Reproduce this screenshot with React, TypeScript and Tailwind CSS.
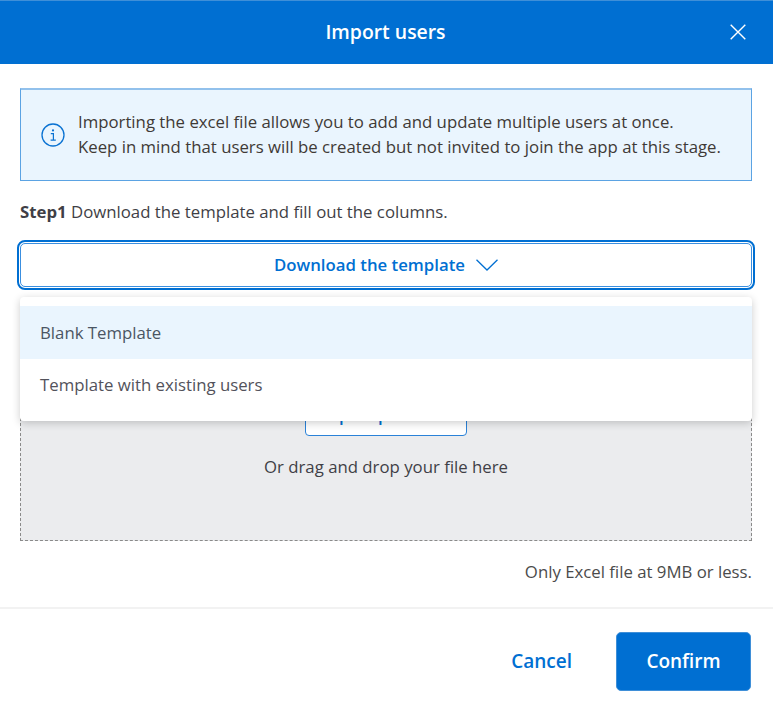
const App = () => {
  return (
    <div className="w-[773px] h-[713px] bg-white font-['Open_Sans',sans-serif] text-[#3f3f46] overflow-hidden">
      {/* Header */}
      <div className="h-[64px] bg-[#006fd2] border-t border-[#3f8fd8] relative flex items-center justify-center">
        <h2 className="pb-[2px] pr-[2px] text-[19.4px] font-semibold text-white">Import users</h2>
        <button className="absolute right-[27px] top-[23px] text-white">
          <svg width="16" height="16" viewBox="0 0 16 16" fill="none" stroke="currentColor" strokeWidth="1.4" className="block">
            <path d="M0.7 0.7 15.3 15.3M15.3 0.7 0.7 15.3" />
          </svg>
        </button>
      </div>

      <div className="pl-5 pr-[21px] pt-6">
        {/* Info box */}
        <div className="h-[93px] flex items-center gap-[13px] pl-5 bg-[#eaf5fe] border border-[#5ba3e3] border-t-2 border-t-[#92c1ec]">
          <svg width="24" height="24" viewBox="0 0 24 24" fill="none" className="shrink-0 text-[#0a72d2]">
            <circle cx="12" cy="12" r="11" stroke="currentColor" strokeWidth="1.3" />
            <circle cx="12" cy="7.4" r="1.1" fill="currentColor" />
            <path d="M9.8 10.6h2.6v6.4M9.6 17.2h5.2" stroke="currentColor" strokeWidth="1.2" />
          </svg>
          <p className="pb-[2px] text-[16.77px] leading-[25px] text-[#3f3a36] whitespace-nowrap">
            Importing the excel file allows you to add and update multiple users at once.
            <br />
            Keep in mind that users will be created but not invited to join the app at this stage.
          </p>
        </div>

        {/* Step 1 */}
        <p className="mt-[20px] text-[16.77px] leading-[22px] text-[#3f3f46]">
          <span className="font-bold">Step1</span> Download the template and fill out the columns.
        </p>

        <div className="relative mt-[20px]">
          <button className="w-full h-[44px] flex items-center justify-center gap-[11px] bg-white border border-[#3a8fe0] rounded-[5px] outline-2 outline-offset-1 outline-[#006fd2] text-[#006fd2] text-[16.77px] font-semibold">
            Download the template
            <svg width="22" height="12" viewBox="0 0 22 12" fill="none" stroke="currentColor" strokeWidth="1.3">
              <path d="M0.5 0.8 11 11 21.5 0.8" />
            </svg>
          </button>

          {/* Dropdown menu */}
          <div className="absolute z-10 left-0 right-0 top-[54px] h-[124px] pt-[9px] bg-white rounded-[4px] shadow-[0_2px_8px_rgba(0,0,0,0.2)]">
            <div className="h-[53px] flex items-center px-5 bg-[#eaf5fe] text-[16.77px] text-[#4b5563]">Blank Template</div>
            <div className="h-[52px] flex items-center px-5 text-[16.77px] text-[#52525b]">Template with existing users</div>
          </div>
        </div>

        {/* Upload area */}
        <div className="mt-[16px] h-[238px] flex flex-col items-center pt-[90px] bg-[#ebecee] border border-dashed border-[#8a8a8a]">
          <button className="w-[162px] h-[42px] pr-[14px] bg-white border border-[#2a82d8] rounded-[4px] text-[#006fd2] text-[16.77px] font-semibold whitespace-nowrap">
            Import process
          </button>
          <p className="mt-[20px] text-[16.77px] leading-[22px] text-[#3f3f46]">Or drag and drop your file here</p>
        </div>

        <p className="mt-[20px] text-right text-[16.77px] leading-[22px] text-[#4b4b4b]">Only Excel file at 9MB or less.</p>
      </div>

      {/* Footer */}
      <div className="mt-[24px] border-t-2 border-[#f2f2f2] pt-[23px] pl-[22px] pr-[22px] flex items-center justify-end">
        <button className="mr-[44px] text-[#006fd2] text-[19px] font-semibold">Cancel</button>
        <button className="w-[135px] h-[59px] rounded-[5px] border border-[#3f8fd8] bg-[#006fd2] text-white text-[19px] font-semibold">Confirm</button>
      </div>
    </div>
  );
};

export default App;
